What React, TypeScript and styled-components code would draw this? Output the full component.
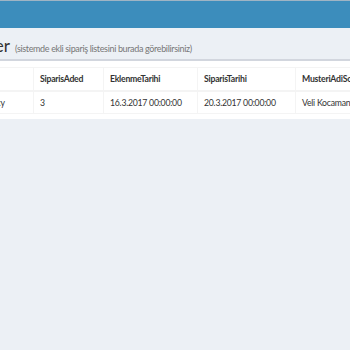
import React from 'react'
import styled, { createGlobalStyle } from 'styled-components'

const GlobalStyle = createGlobalStyle`
  html, body {
    margin: 0;
    padding: 0;
    background: #ecf0f5;
    font-family: Lato, "Open Sans", sans-serif;
    color: #333;
    overflow: hidden;
  }
`

const TopBar = styled.header`
  height: 27px;
  border-top: 1px solid #9fb4c4;
  background: #3c8dbc;
`

const Main = styled.main`
  margin-left: -68px;
  width: 620px;
`

const ContentHeader = styled.section`
  display: flex;
  align-items: baseline;
  gap: 5px;
  padding: 8px 0 0 10px;
  height: 20px;
`

const Title = styled.h1`
  margin: 0;
  font-size: 17px;
  font-weight: 400;
  line-height: 20px;
  color: #333;
`

const Subtitle = styled.small`
  font-size: 9px;
  letter-spacing: -0.35px;
  color: #777;
`

const Box = styled.section`
  margin-top: 3px;
  background: #fff;
  border-top: 2px solid #d2d6de;
  padding: 6px 7px 5px;
  box-shadow: 0 1px 1px rgba(0, 0, 0, 0.1);
`

const Table = styled.table`
  border-collapse: collapse;
  table-layout: fixed;
  font-size: 8.7px;
  letter-spacing: -0.25px;
`

const Th = styled.th<{ $w: number }>`
  box-sizing: border-box;
  width: ${(p) => p.$w}px;
  text-align: left;
  font-weight: 700;
  padding: 5px 6px;
  line-height: 12px;
  border: 1px solid #f4f4f4;
  border-bottom-width: 2px;
  white-space: nowrap;
  overflow: hidden;
`

const Td = styled.td`
  padding: 5px 6px;
  line-height: 11px;
  border: 1px solid #f4f4f4;
  white-space: nowrap;
  overflow: hidden;
`

const columns = [
  { key: 'UrunAdi', w: 94 },
  { key: 'SiparisAded', w: 70 },
  { key: 'EklenmeTarihi', w: 94 },
  { key: 'SiparisTarihi', w: 98 },
  { key: 'MusteriAdiSoyadi', w: 120 },
]

const rows = [['Samsung Galaxy', '3', '16.3.2017 00:00:00', '20.3.2017 00:00:00', 'Veli Kocaman']]

export default function App() {
  return (
    <>
      <GlobalStyle />
      <TopBar />
      <Main>
        <ContentHeader>
          <Title>Siparişler</Title>
          <Subtitle>(sistemde ekli sipariş listesini burada görebilirsiniz)</Subtitle>
        </ContentHeader>
        <Box>
          <Table>
            <thead>
              <tr>
                {columns.map((c) => (
                  <Th key={c.key} $w={c.w}>
                    {c.key}
                  </Th>
                ))}
              </tr>
            </thead>
            <tbody>
              {rows.map((r, i) => (
                <tr key={i}>
                  {r.map((v, j) => (
                    <Td key={j}>{v}</Td>
                  ))}
                </tr>
              ))}
            </tbody>
          </Table>
        </Box>
      </Main>
    </>
  )
}
